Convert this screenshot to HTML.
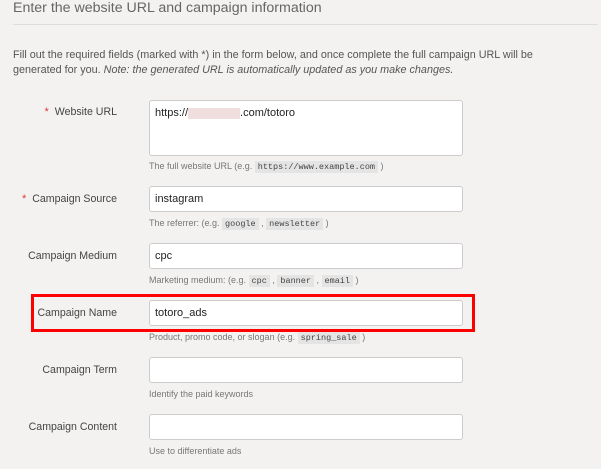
<!DOCTYPE html><html><head><style>
body{margin:0;width:601px;height:469px;background:#f3f2f1;font-family:"Liberation Sans",sans-serif;color:#555;position:relative;overflow:hidden}
.a{position:absolute}
h1{position:absolute;left:13px;top:0px;margin:0;font-size:14.2px;font-weight:normal;color:#666}
.hr{left:13px;top:24px;width:585px;height:1px;background:#ddd}
.p{left:13px;top:48px;font-size:10.8px;line-height:15px;color:#555;width:530px}
.lab{right:484px;font-size:10.6px;color:#444;text-align:right;white-space:nowrap}
.lab b{color:#d33;font-weight:normal;margin-right:6px}
.in{left:149px;width:314px;height:25px;background:#fff;border:1px solid #ccc;border-radius:3px;font-size:11px;color:#222;box-sizing:border-box;padding:6px 0 0 5px}
.h{left:149px;font-size:9px;color:#777;white-space:nowrap}
code{font-family:"Liberation Mono",monospace;font-size:8.5px;background:#e4e4e4;padding:1px 3px;color:#444}
</style></head><body>
<h1>Enter the website URL and campaign information</h1>
<div class="a hr"></div>
<div class="a p">Fill out the required fields (marked with *) in the form below, and once complete the full campaign URL will be<br>generated for you. <i>Note: the generated URL is automatically updated as you make changes.</i></div>

<div class="a lab" style="top:106px"><b>*</b>Website URL</div>
<div class="a in" style="top:100px;height:56px">https://<span style="display:inline-block;width:52px;height:11px;background:#f0dede;vertical-align:middle"></span>.com/totoro</div>
<div class="a h" style="top:161px">The full website URL (e.g. <code>https://www.example.com</code> )</div>

<div class="a lab" style="top:193px"><b>*</b>Campaign Source</div>
<div class="a in" style="top:186px;height:26px">instagram</div>
<div class="a h" style="top:218px">The referrer: (e.g. <code>google</code> , <code>newsletter</code> )</div>

<div class="a lab" style="top:250px">Campaign Medium</div>
<div class="a in" style="top:243px;height:26px">cpc</div>
<div class="a h" style="top:275px">Marketing medium: (e.g. <code>cpc</code> , <code>banner</code> , <code>email</code> )</div>

<div class="a" style="left:31px;top:294px;width:444px;height:38px;border:3px solid #f00;box-sizing:border-box"></div>
<div class="a lab" style="top:307px">Campaign Name</div>
<div class="a in" style="top:300px;height:26px">totoro_ads</div>
<div class="a h" style="top:332px">Product, promo code, or slogan (e.g. <code>spring_sale</code> )</div>

<div class="a lab" style="top:364px">Campaign Term</div>
<div class="a in" style="top:357px;height:26px"></div>
<div class="a h" style="top:389px">Identify the paid keywords</div>

<div class="a lab" style="top:421px">Campaign Content</div>
<div class="a in" style="top:414px;height:26px"></div>
<div class="a h" style="top:446px">Use to differentiate ads</div>
</body></html>
